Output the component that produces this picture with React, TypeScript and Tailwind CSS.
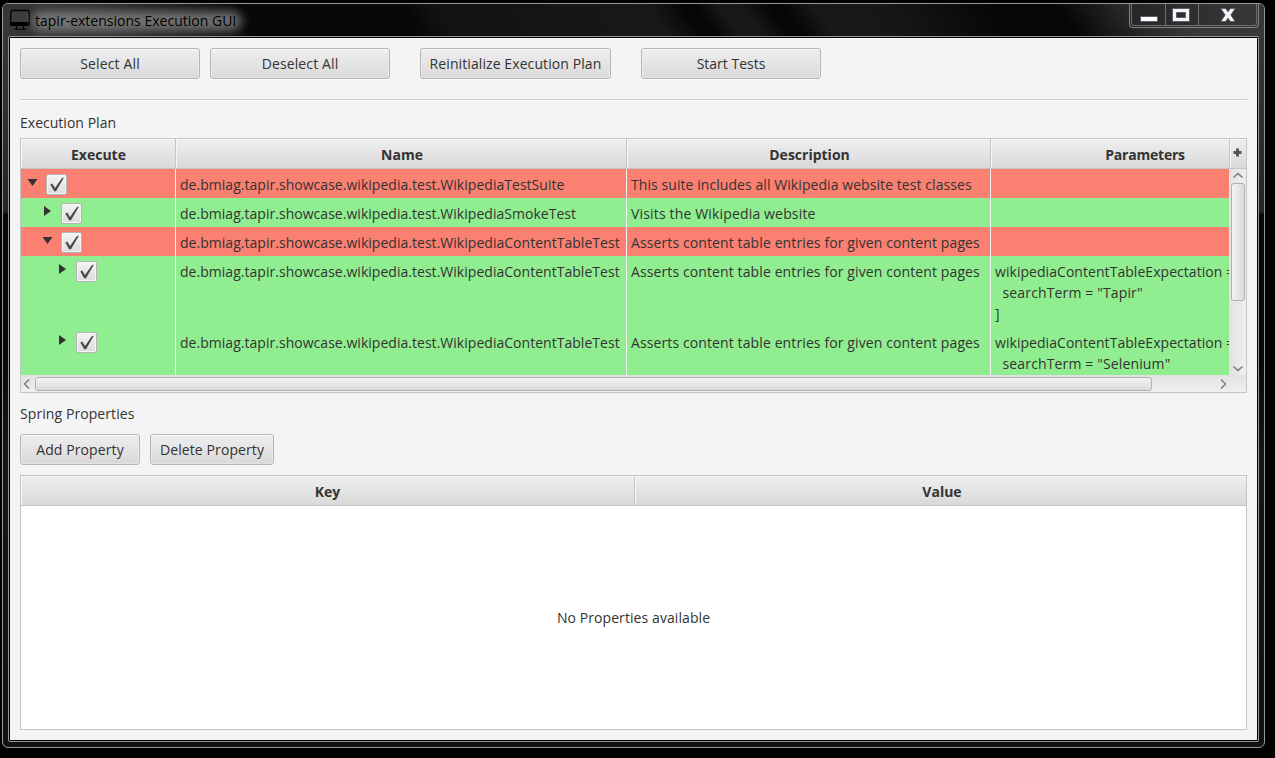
import React from "react";

const btn =
  "flex h-[31px] items-center justify-center whitespace-nowrap rounded-[3px] border border-[#b5b5b5] bg-linear-to-b from-[#efefef] to-[#d9d9d9] shadow-[inset_0_1px_0_#fbfbfb,inset_1px_0_0_#ececec,inset_-1px_0_0_#ececec,inset_0_-1px_0_#e2e2e2,0_1px_0_#fafafa]";
const head =
  "flex items-center justify-center border-b border-[#c5c5c5] bg-linear-to-b from-[#efefef] to-[#d9d9d9] pt-[1px] font-bold shadow-[inset_1px_1px_0_#f6f6f6]";

function Button({ label, className, spacing }: { label: string; className: string; spacing: string }) {
  return (
    <button className={`${btn} ${className}`}>
      <span className={spacing}>{label}</span>
    </button>
  );
}

function Check() {
  return (
    <span className="flex h-[21px] w-[21px] shrink-0 items-center justify-center rounded-[2px] border border-[#b5b5b5] bg-linear-to-b from-[#f4f4f4] to-[#dcdcdc] shadow-[inset_0_0_0_1px_#f6f6f6]">
      <svg width="19" height="19" viewBox="0 0 19 19" className="shrink-0">
        <path d="M3.3 9.6 5.2 8.6 8 13 14.800 3.200l2.200-.8L9 16.300H7.200Z" fill="#4a4a4a" />
      </svg>
    </span>
  );
}

function Arrow({ open }: { open: boolean }) {
  return (
    <svg width="10" height="10" viewBox="0 0 10 10" className="mt-[7px] shrink-0">
      <path d={open ? "M-.5 2h10L4.500 9Z" : "M1 0v10L8 5Z"} fill="#333" />
    </svg>
  );
}

type Row = {
  indent: string;
  open: boolean;
  color: string;
  name: string;
  desc: string;
  descSpacing: string;
  params: string[];
  height: string;
};
const contentName = "de.bmiag.tapir.showcase.wikipedia.test.WikipediaContentTableTest";
const contentDesc = "Asserts content table entries for given content pages";
const rows: Row[] = [
  { indent: "pl-[7px]", open: true, color: "bg-[#fa8072]", name: "de.bmiag.tapir.showcase.wikipedia.test.WikipediaTestSuite", desc: "This suite includes all Wikipedia website test classes", descSpacing: "tracking-[0.07px]", params: [], height: "h-[29px]" },
  { indent: "pl-[22px]", open: false, color: "bg-[#90ee90]", name: "de.bmiag.tapir.showcase.wikipedia.test.WikipediaSmokeTest", desc: "Visits the Wikipedia website", descSpacing: "tracking-[0.16px]", params: [], height: "h-[29px]" },
  { indent: "pl-[22px]", open: true, color: "bg-[#fa8072]", name: contentName, desc: contentDesc, descSpacing: "tracking-[0.11px]", params: [], height: "h-[29px]" },
  { indent: "pl-[37px]", open: false, color: "bg-[#90ee90]", name: contentName, desc: contentDesc, descSpacing: "tracking-[0.11px]", params: ["wikipediaContentTableExpectation = [", '  searchTerm = "Tapir"', "]"], height: "h-[71px]" },
  { indent: "pl-[37px]", open: false, color: "bg-[#90ee90]", name: contentName, desc: contentDesc, descSpacing: "tracking-[0.11px]", params: ["wikipediaContentTableExpectation = [", '  searchTerm = "Selenium"'], height: "h-[48px]" },
];

function Chevron({ d }: { d: string }) {
  return (
    <svg width="12" height="12" viewBox="0 0 12 12" className="shrink-0" fill="none" stroke="#777" strokeWidth="1.4">
      <path d={d} />
    </svg>
  );
}

function TitleBar() {
  return (
    <div className="flex h-[32px] w-full justify-between rounded-t-[5px] bg-[linear-gradient(55deg,#383838_0,#303030_90px,#080808_205px,#080808_345px,#121212_368px,#181818_545px,#060606_574px,#060606_584px,#181818_604px,#181818_622px,#060606_645px,#060606_655px,#181818_682px,#161616_740px,#060606_830px,#060606_880px,#262626_930px,#383838_975px)]">
      <div className="flex pl-[7px] pt-[5px]">
        <svg width="21" height="22" viewBox="0 0 21 22" className="shrink-0">
          <rect x="0.750" y="1.500" width="18.500" height="14.500" rx="1.500" fill="#3c3c3c" stroke="#000" strokeWidth="1.300" />
          <path d="M0 13h20v2.500q0 1.500-1.500 1.500h-17Q0 17 0 15.500ZM6 17h1.300v3H6ZM12.700 17H14v3h-1.300ZM4 19.700h12v1.100H4Z" fill="#000" />
        </svg>
        <div className="relative ml-[4px] mt-[1px] h-[22px] text-[14px] leading-[22px] text-black">
          <div className="absolute -left-[3px] top-[1px] h-[20px] w-[210px] rounded-full bg-[#8a8a8a]/75 blur-[5px]" />
          <span className="relative whitespace-nowrap tracking-[0.01px]">tapir-extensions Execution GUI</span>
        </div>
      </div>
      <div className="mr-[5px] flex h-[24px] w-[130px] rounded-b-[4px] border border-t-0 border-[#808080] px-px pb-px">
        <div className="flex h-[22px] w-full rounded-b-[3px] border border-t-0 border-[#6c6c6c] bg-linear-to-r from-[#262626] to-[#383838]">
          <div className="flex w-[34px] items-end justify-center border-r border-[#707070] pb-[3px]">
            <svg width="18" height="6" viewBox="0 0 18 6"><rect x="0.500" y="0.500" width="17" height="5" fill="#fff" stroke="#4c5066" strokeWidth=".8" /></svg>
          </div>
          <div className="flex w-[33px] items-center justify-center border-r border-[#707070] pr-[2px]">
            <svg width="18" height="14" viewBox="0 0 18 14"><path fillRule="evenodd" d="M.5.5h17v13H.5ZM4.500 4.500h9v5h-9Z" fill="#f4f4f4" stroke="#4c5066" strokeWidth=".8" /></svg>
          </div>
          <div className="flex flex-1 items-center justify-center">
            <svg width="16" height="14" viewBox="0 0 16 14"><path d="M.8.5h4.800L8 3.800 10.400.5h4.800L10.800 7l4.400 6.500h-4.800L8 10.200l-2.400 3.300H.8L5.200 7Z" fill="#f4f4f4" stroke="#4c5066" strokeWidth=".8" /></svg>
          </div>
        </div>
      </div>
    </div>
  );
}

export default function App() {
  return (
    <div className="h-[758px] w-[1275px] overflow-hidden bg-black pl-[2px] pt-[3px] font-['Open_Sans','Noto_Sans',sans-serif] text-[14px] text-[#333]">
      <div className="h-[745px] w-[1263px] rounded-[6px] border border-[#999] bg-[linear-gradient(180deg,#383838_0,#303030_100px,#242424_208px,#080808_210px,#080808_350px,#161616_450px,#111_745px)]">
        <TitleBar />
        <div className="ml-[5px] h-[706px] w-[1251px] rounded-[2px] border border-[#999] bg-black p-px">
          <main className="flex h-full w-full flex-col bg-[#f4f4f4] px-[10px] pt-[10px]">
            <div className="flex">
              <Button label="Select All" className="w-[180px]" spacing="tracking-[0.15px]" />
              <Button label="Deselect All" className="ml-[10px] w-[180px]" spacing="tracking-[0.12px]" />
              <Button label="Reinitialize Execution Plan" className="ml-[30px] w-[191px]" spacing="tracking-[0.09px]" />
              <Button label="Start Tests" className="ml-[30px] w-[180px]" spacing="tracking-[0px]" />
            </div>
            <div className="mt-[20px] h-[2px] w-full border-b border-t border-b-white border-t-[#c9c9c9]" />
            <div className="mt-[11px] h-[21px] leading-[21px]"><span className="tracking-[0.02px]">Execution Plan</span></div>
            <section className="mt-[5px] flex h-[255px] w-full flex-col border border-[#c5c5c5]">
              <div className="flex h-[30px] shrink-0">
                <div className={`${head} w-[155px] border-r pl-[1px]`}>Execute</div>
                <div className={`${head} w-[451px] border-r pl-[2px]`}>Name</div>
                <div className={`${head} w-[364px] border-r pl-[2px]`}>Description</div>
                <div className={`${head} w-[239px] border-r pl-[70px] tracking-[-0.2px]`}>Parameters</div>
                <div className={`${head} w-[16px] pr-[2px]`}>
                  <svg width="9" height="9" viewBox="0 0 9 9" className="mb-[4px] shrink-0"><path d="M3 .5h3V3h2.500v3H6v2.500H3V6H.5V3H3Z" fill="#555" /></svg>
                </div>
              </div>
              <div className="flex h-[206px] shrink-0">
                <div className="w-[1208px] overflow-hidden leading-[21px]">
                  {rows.map((r, i) => (
                    <div key={i} className={`flex overflow-hidden whitespace-pre ${r.height} ${r.color}`}>
                      <div className={`flex w-[155px] shrink-0 items-start border-r border-[#f4f4f4] pt-[5px] ${r.indent}`}>
                        <div className="-mt-[5px] mr-[8px] flex pt-[1px]"><Arrow open={r.open} /></div>
                        <Check />
                      </div>
                      <div className="w-[451px] shrink-0 border-r border-[#f4f4f4] pl-[4px] pt-[5px]"><span className="tracking-[0.03px]">{r.name}</span></div>
                      <div className="w-[364px] shrink-0 border-r border-[#f4f4f4] pl-[4px] pt-[5px]"><span className={r.descSpacing}>{r.desc}</span></div>
                      <div className="w-[238px] shrink-0 overflow-hidden pl-[4px] pt-[5px]">
                        {r.params.map((line, n) => (
                          <div key={n} className={n === 0 ? "tracking-[0.05px]" : "tracking-[0.14px]"}>{line}</div>
                        ))}
                      </div>
                    </div>
                  ))}
                </div>
                <div className="flex w-[17px] flex-col items-center bg-linear-to-r from-[#e2e2e2] to-[#efefef] py-px pl-px">
                  <Chevron d="M1.500 7.500 6 3.500l4.500 4" />
                  <div className="mt-px h-[118px] w-[14px] rounded-[3px] border border-[#b0b0b0] bg-linear-to-r from-[#f4f4f4] to-[#dadada]" />
                  <div className="mt-auto flex"><Chevron d="M1.500 4.500 6 8.500l4.500-4" /></div>
                </div>
              </div>
              <div className="flex flex-1 items-center bg-linear-to-b from-[#e2e2e2] to-[#efefef]">
                <Chevron d="M8 1.500 3.500 6 8 10.500" />
                <div className="ml-[2px] h-[14px] w-[1117px] rounded-[3px] border border-[#b0b0b0] bg-linear-to-b from-[#f4f4f4] to-[#dadada]" />
                <div className="ml-auto mr-[17px] flex"><Chevron d="M4 1.500 8.500 6 4 10.500" /></div>
              </div>
            </section>
            <div className="mt-[10px] h-[21px] leading-[21px]"><span className="tracking-[0.08px]">Spring Properties</span></div>
            <div className="mt-[10px] flex">
              <Button label="Add Property" className="w-[120px]" spacing="tracking-[0.1px]" />
              <Button label="Delete Property" className="ml-[10px] w-[124px]" spacing="tracking-[0.1px]" />
            </div>
            <section className="mt-[10px] flex h-[255px] w-full flex-col border border-[#c5c5c5] bg-white">
              <div className="flex h-[30px] shrink-0">
                <div className={`${head} w-[614px] border-r`}>Key</div>
                <div className={`${head} flex-1 pl-[3px]`}>Value</div>
              </div>
              <div className="flex flex-1 items-center justify-center"><span className="tracking-[0.08px]">No Properties available</span></div>
            </section>
          </main>
        </div>
      </div>
    </div>
  );
}
